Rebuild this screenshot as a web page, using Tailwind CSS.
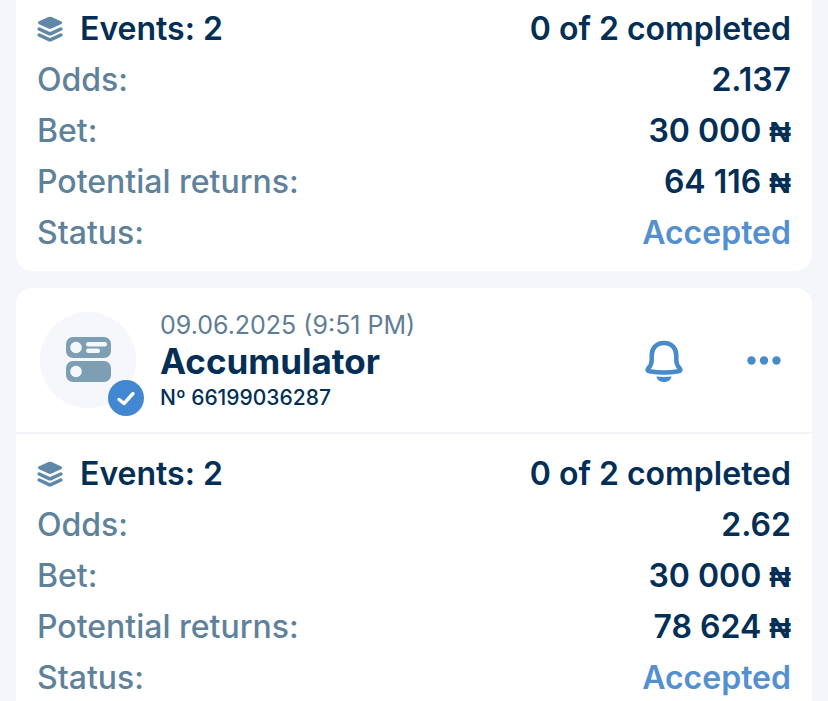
<!DOCTYPE html>
<html lang="en">
<head>
<meta charset="utf-8">
<meta name="viewport" content="width=device-width, initial-scale=1">
<title>Bet history</title>
<script src="https://cdn.jsdelivr.net/npm/@tailwindcss/browser@4"></script>
</head>
<body class="bg-[#f5f6fa] font-['Inter','Liberation_Sans',sans-serif] text-[#032f56]">
<svg class="hidden" aria-hidden="true">
  <symbol id="layers" viewBox="0 0 26 28">
    <path d="M11.4 2 Q13 1.300 14.6 2 L24.400 6.600 Q26 7.800 24.400 9 L14.6 13.600 Q13 14.300 11.4 13.600 L1.600 9 Q0 7.800 1.600 6.600Z" fill="currentColor"/>
    <path d="M2.200 14 L11.6 18.400 Q13 19.100 14.4 18.400 L23.800 14 M2.200 20 L11.6 24.400 Q13 25.100 14.4 24.400 L23.800 20" fill="none" stroke="currentColor" stroke-width="3.500" stroke-linecap="round" stroke-linejoin="round"/>
  </symbol>
</svg>
<main class="flex h-screen flex-col gap-[17px] overflow-hidden px-4">
  <article class="shrink-0 rounded-b-2xl bg-white px-[21px] pt-[3px] pb-[13px]">
    <header class="flex h-[51px] items-center justify-between text-[32px] font-semibold">
      <h2 class="flex items-center gap-[17px]"><svg class="h-7 w-[26px] text-[#5f88a8]" aria-hidden="true"><use href="#layers"/></svg>Events: 2</h2>
      <p>0 of 2 completed</p>
    </header>
    <dl class="text-[32px] leading-[51px]">
      <div class="flex h-[51px] justify-between"><dt class="font-medium text-[#5f829b]">Odds:</dt><dd class="font-semibold">2.137</dd></div>
      <div class="flex h-[51px] justify-between"><dt class="font-medium text-[#5f829b]">Bet:</dt><dd class="font-semibold">30 000 <span class="font-['Liberation_Sans',sans-serif] text-[30px] font-bold">₦</span></dd></div>
      <div class="flex h-[51px] justify-between"><dt class="font-medium text-[#5f829b]">Potential returns:</dt><dd class="font-semibold">64 116 <span class="font-['Liberation_Sans',sans-serif] text-[30px] font-bold">₦</span></dd></div>
      <div class="flex h-[51px] justify-between"><dt class="font-medium text-[#5f829b]">Status:</dt><dd class="font-semibold text-[#5490d0]">Accepted</dd></div>
    </dl>
  </article>

  <article class="shrink-0 rounded-2xl bg-white">
    <header class="flex h-[146px] items-center border-b-2 border-[#f3f4f8] pr-6 pl-6">
      <div class="relative size-24 shrink-0 rounded-full bg-[#f6f7fb]">
        <svg class="size-24" viewBox="0 0 96 96" aria-hidden="true">
          <rect x="26" y="25" width="45" height="21" rx="7" fill="#7c9fb4"/>
          <rect x="26" y="49" width="45" height="21" rx="7" fill="#7c9fb4"/>
          <g fill="#f6f7fb"><circle cx="36" cy="35.500" r="5.800"/><circle cx="36" cy="59.500" r="5.800"/><rect x="46" y="30" width="21" height="4.500" rx="2.250"/><rect x="46" y="36.500" width="14" height="4.500" rx="2.250"/></g>
        </svg>
        <svg class="absolute -right-2 -bottom-2 size-9" viewBox="0 0 36 36" aria-hidden="true"><circle cx="18" cy="18" r="18" fill="#4287d1"/><path d="M11 19.500 L16 23.500 L25 13.500" fill="none" stroke="#fff" stroke-width="3.400" stroke-linecap="round" stroke-linejoin="round"/></svg>
      </div>
      <div class="ml-6 grow pt-1">
        <p class="text-[25px] leading-8 text-[#5f7d95]">09.06.2025 (9:51 PM)</p>
        <h2 class="text-[35px] leading-10 font-bold">Accumulator</h2>
        <p class="text-[21px] leading-[34px] font-medium">Nº 66199036287</p>
      </div>
      <div class="flex items-center gap-[52px]">
        <button type="button" aria-label="Notifications" class="grid size-12 place-items-center text-[#478bcc]">
          <svg class="h-11 w-10" viewBox="0 0 40 44" fill="none" aria-hidden="true"><path d="M20 5 C12 5 7.700 10.500 7.700 17.500 V22 C7.700 26 6.400 28 4.400 30.200 Q2.200 33 5.500 33.200 Q20 35.600 34.500 33.200 Q37.800 33 35.600 30.200 C33.600 28 32.300 26 32.300 22 V17.500 C32.300 10.500 28 5 20 5Z" stroke="currentColor" stroke-width="4.500" stroke-linejoin="round"/><path d="M12.300 38.500 Q20 39.300 27.700 38.500 Q26 44 20 44 Q14 44 12.300 38.500Z" fill="currentColor"/></svg>
        </button>
        <button type="button" aria-label="More options" class="grid size-12 place-items-center text-[#478bcc]">
          <svg class="h-3 w-9" viewBox="0 0 36 12" fill="currentColor" aria-hidden="true"><circle cx="5.500" cy="6.500" r="4.200"/><circle cx="18" cy="6.500" r="4.200"/><circle cx="30.500" cy="6.500" r="4.200"/></svg>
        </button>
      </div>
    </header>
    <div class="px-[21px] pt-[14px] pb-[13px]">
      <div class="flex h-[51px] items-center justify-between text-[32px] font-semibold">
        <h3 class="flex items-center gap-[17px]"><svg class="h-7 w-[26px] text-[#5f88a8]" aria-hidden="true"><use href="#layers"/></svg>Events: 2</h3>
        <p>0 of 2 completed</p>
      </div>
      <dl class="text-[32px] leading-[51px]">
        <div class="flex h-[51px] justify-between"><dt class="font-medium text-[#5f829b]">Odds:</dt><dd class="font-semibold">2.62</dd></div>
        <div class="flex h-[51px] justify-between"><dt class="font-medium text-[#5f829b]">Bet:</dt><dd class="font-semibold">30 000 <span class="font-['Liberation_Sans',sans-serif] text-[30px] font-bold">₦</span></dd></div>
        <div class="flex h-[51px] justify-between"><dt class="font-medium text-[#5f829b]">Potential returns:</dt><dd class="font-semibold">78 624 <span class="font-['Liberation_Sans',sans-serif] text-[30px] font-bold">₦</span></dd></div>
        <div class="flex h-[51px] justify-between"><dt class="font-medium text-[#5f829b]">Status:</dt><dd class="font-semibold text-[#5490d0]">Accepted</dd></div>
      </dl>
    </div>
  </article>
</main>
</body>
</html>
